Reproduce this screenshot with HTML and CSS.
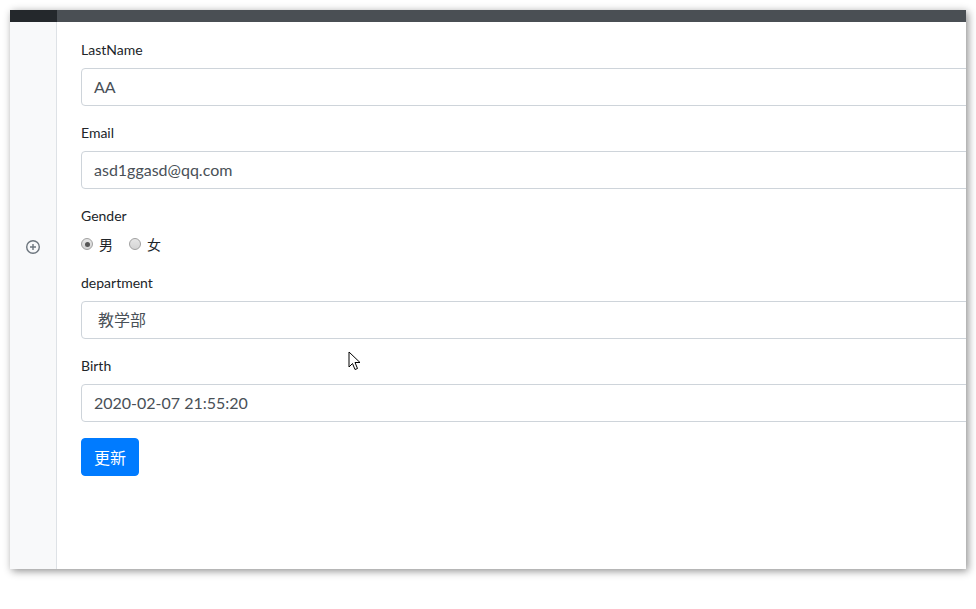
FILE: index.html
```html
<!DOCTYPE html>
<html lang="zh">
<head>
<meta charset="utf-8">
<link rel="stylesheet" href="styles.css">
</head>
<body>
<div class="page">
  <div class="window">
    <div class="topbar"><div class="tb-left"></div><div class="tb-right"></div></div>
    <div class="body">
      <aside class="sidebar">
        <svg class="plus" width="16" height="16" viewBox="0 0 16 16"><circle cx="8" cy="8" r="6.3" fill="none" stroke="#6c757d" stroke-width="1.4"/><path d="M8 5v6M5 8h6" stroke="#6c757d" stroke-width="1.4"/></svg>
      </aside>
      <main class="main">
        <form class="form">
          <div class="group">
            <label class="lbl">LastName</label>
            <div class="control">AA</div>
          </div>
          <div class="group">
            <label class="lbl">Email</label>
            <div class="control">asd1ggasd@qq.com</div>
          </div>
          <div class="group">
            <label class="lbl">Gender</label>
            <div class="radios">
              <span class="radio-item"><span class="radio checked"></span><span class="rtext">男</span></span>
              <span class="radio-item"><span class="radio"></span><span class="rtext">女</span></span>
            </div>
          </div>
          <div class="group">
            <label class="lbl">department</label>
            <div class="control select">教学部</div>
          </div>
          <div class="group">
            <label class="lbl">Birth</label>
            <div class="control">2020-02-07 21:55:20</div>
          </div>
          <button type="button" class="btn">更新</button>
        </form>
      </main>
    </div>
    <svg class="cursor" width="14" height="22" viewBox="0 0 14 22"><path d="M1 1 L1 16 L4.5 12.5 L7 18.5 L9.5 17.5 L7 11.5 L12 11.5 Z" fill="#fff" stroke="#000" stroke-width="1" stroke-linejoin="miter"/></svg>
  </div>
</div>
</body>
</html>
```
FILE: styles.css
```css
* { box-sizing: border-box; }
html, body { margin: 0; padding: 0; background: #fff; }
body { font-family: "Lato", "Noto Sans CJK SC", sans-serif; color: #212529; }
.page { padding: 10px; width: 976px; height: 609px; }
.window {
  position: relative;
  width: 956px;
  height: 559px;
  background: #fff;
  box-shadow: 2px 2px 8px rgba(0,0,0,0.45);
  overflow: hidden;
  display: flex;
  flex-direction: column;
}
.topbar { height: 12px; display: flex; flex: none; }
.tb-left { width: 47px; background: #24282c; }
.tb-right { flex: 1; background: #4a4f54; }
.body { flex: 1; display: flex; min-height: 0; }
.sidebar {
  width: 47px;
  flex: none;
  background: #f8f9fa;
  border-right: 1px solid #dee2e6;
  display: flex;
  justify-content: center;
  padding-top: 217px;
  padding-right: 1px;
}
.plus { display: block; }
.main { flex: 1; padding: 17px 0 0 24px; overflow: hidden; }
.form { width: 1000px; }
.group { margin-bottom: 16px; }
.lbl { display: block; font-size: 14px; line-height: 20px; padding-top: 1px; margin-bottom: 8px; color: #212529; }
.control {
  height: 38px;
  border: 1px solid #ced4da;
  border-radius: 4px;
  padding: 0 12px;
  font-size: 16px;
  line-height: 36px;
  color: #495057;
}
.control.select { padding-left: 16px; }
.radios { display: flex; align-items: center; height: 24px; margin-top: -2px; }
.radio-item { display: inline-flex; align-items: center; margin-right: 16px; font-size: 14px; color: #212529; }
.radio {
  width: 12px; height: 12px;
  border-radius: 50%;
  border: 1px solid #a0a0a0;
  background: linear-gradient(#e6e6e6, #d4d4d4);
  position: relative;
  margin-right: 6px;
}
.radio.checked::after {
  content: "";
  position: absolute;
  left: 2.5px; top: 2.5px;
  width: 5px; height: 5px;
  border-radius: 50%;
  background: #555;
}
.btn {
  height: 38px;
  padding: 0 12px;
  border: 1px solid #007bff;
  background: #007bff;
  color: #fff;
  border-radius: 4px;
  font-size: 16px;
  font-family: "Noto Sans CJK SC", sans-serif;
  line-height: 36px;
}
.cursor { position: absolute; left: 338px; top: 341px; }
```
